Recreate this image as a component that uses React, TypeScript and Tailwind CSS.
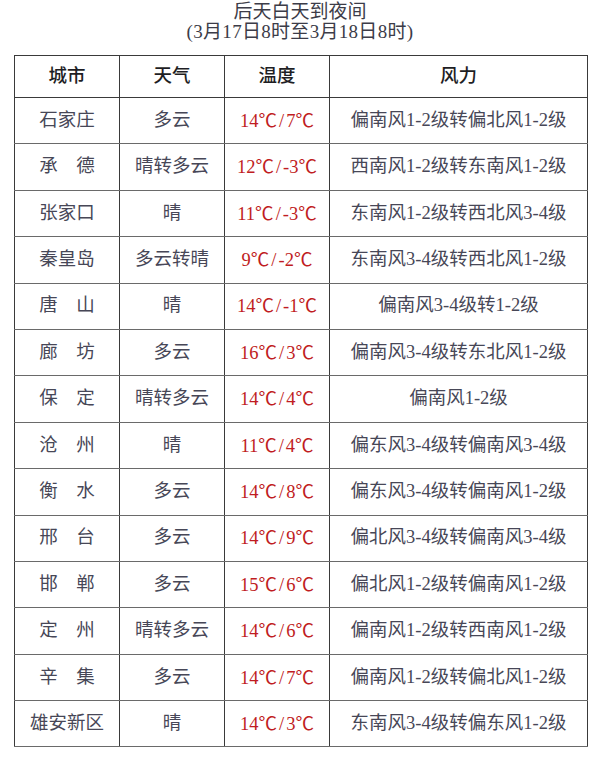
const rows: [string, string, string, string][] = [
  ["石家庄", "多云", "14℃/7℃", "偏南风1-2级转偏北风1-2级"],
  ["承　德", "晴转多云", "12℃/-3℃", "西南风1-2级转东南风1-2级"],
  ["张家口", "晴", "11℃/-3℃", "东南风1-2级转西北风3-4级"],
  ["秦皇岛", "多云转晴", "9℃/-2℃", "东南风3-4级转西北风1-2级"],
  ["唐　山", "晴", "14℃/-1℃", "偏南风3-4级转1-2级"],
  ["廊　坊", "多云", "16℃/3℃", "偏南风3-4级转东北风1-2级"],
  ["保　定", "晴转多云", "14℃/4℃", "偏南风1-2级"],
  ["沧　州", "晴", "11℃/4℃", "偏东风3-4级转偏南风3-4级"],
  ["衡　水", "多云", "14℃/8℃", "偏东风3-4级转偏南风1-2级"],
  ["邢　台", "多云", "14℃/9℃", "偏北风3-4级转偏南风3-4级"],
  ["邯　郸", "多云", "15℃/6℃", "偏北风1-2级转偏南风1-2级"],
  ["定　州", "晴转多云", "14℃/6℃", "偏南风1-2级转西南风1-2级"],
  ["辛　集", "多云", "14℃/7℃", "偏南风1-2级转偏北风1-2级"],
  ["雄安新区", "晴", "14℃/3℃", "东南风3-4级转偏东风1-2级"],
];

const font = {
  fontFamily: '"Liberation Serif", "Noto Sans CJK SC", serif',
};

// ℃ comes from the CJK font so it is full width like the original
function TempCell({ t }: { t: string }) {
  const [hi, lo] = t.split("/");
  return (
    <>
      {hi.replace("℃", "")}
      <span className="font-['Noto_Sans_CJK_SC',sans-serif]">℃</span>
      <span className="px-[2px]">/</span>
      {lo.replace("℃", "")}
      <span className="font-['Noto_Sans_CJK_SC',sans-serif]">℃</span>
    </>
  );
}

const cell =
  "border-x border-[#3a3a3a] border-y border-y-[#6a6a6a] text-center whitespace-nowrap";

export default function App() {
  return (
    <div className="w-[600px] h-[775px] bg-white text-[#474757]" style={font}>
      <div className="pt-[2px] text-center text-[19px] leading-[20px] text-[#3c3c48]">
        <div>后天白天到夜间</div>
        <div className="tracking-[0.3px]">(3月17日8时至3月18日8时)</div>
      </div>

      <table className="mt-[13px] ml-[14px] w-[574px] table-fixed border-collapse text-[18.5px]">
        <colgroup>
          <col className="w-[105px]" />
          <col className="w-[105px]" />
          <col className="w-[105px]" />
          <col />
        </colgroup>
        <thead>
          <tr className="h-[42px]">
            {["城市", "天气", "温度", "风力"].map((h) => (
              <th
                key={h}
                className="border border-[#3a3a3a] text-center font-medium text-[#1e1e24]"
              >
                {h}
              </th>
            ))}
          </tr>
        </thead>
        <tbody>
          {rows.map((r) => (
            <tr key={r[0]} className="h-[46.4px]">
              <td className={cell}>{r[0]}</td>
              <td className={cell}>{r[1]}</td>
              <td className={`${cell} text-[#c01c22]`}>
                <TempCell t={r[2]} />
              </td>
              <td className={cell}>{r[3]}</td>
            </tr>
          ))}
        </tbody>
      </table>
    </div>
  );
}
